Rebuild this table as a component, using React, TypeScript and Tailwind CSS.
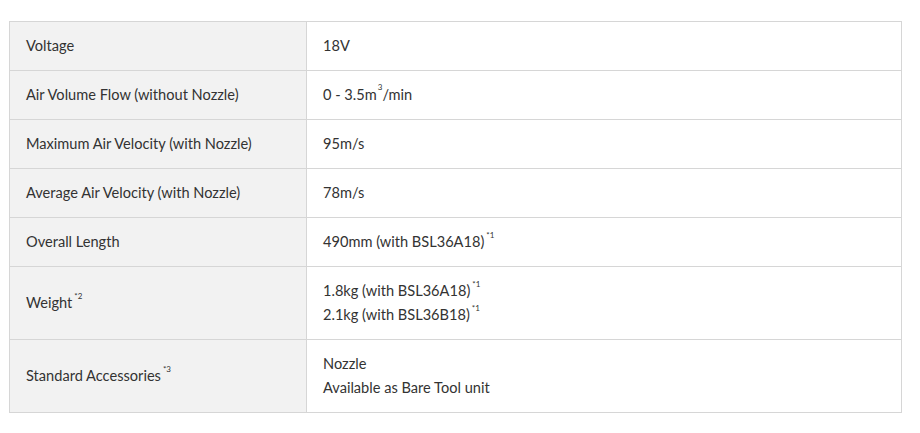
const Sup = ({ children }: { children: React.ReactNode }) => (
  <sup className="relative -top-[9px] ml-[2px] text-[8px]">{children}</sup>
);

const rows: { label: React.ReactNode; value: React.ReactNode }[] = [
  { label: "Voltage", value: "18V" },
  {
    label: "Air Volume Flow (without Nozzle)",
    value: (
      <>
        0 - 3.5m<sup className="relative -top-[10px] ml-px text-[8px]">3</sup>/min
      </>
    ),
  },
  { label: "Maximum Air Velocity (with Nozzle)", value: "95m/s" },
  { label: "Average Air Velocity (with Nozzle)", value: "78m/s" },
  {
    label: "Overall Length",
    value: (
      <>
        490mm (with BSL36A18)<Sup>*1</Sup>
      </>
    ),
  },
  {
    label: (
      <>
        Weight<Sup>*2</Sup>
      </>
    ),
    value: (
      <>
        1.8kg (with BSL36A18)<Sup>*1</Sup>
        <br />
        2.1kg (with BSL36B18)<Sup>*1</Sup>
      </>
    ),
  },
  {
    label: (
      <>
        Standard Accessories<Sup>*3</Sup>
      </>
    ),
    value: (
      <>
        Nozzle
        <br />
        Available as Bare Tool unit
      </>
    ),
  },
];

export default function App() {
  return (
    <div className="bg-white px-[9px] pt-[21px] pb-5 font-['Lato','Noto_Sans',sans-serif] text-[14.6px] text-[#333]">
      <table className="w-[893px] border-collapse">
        <tbody>
          {rows.map((row, i) => (
            <tr key={i}>
              <td className="w-[297px] border border-[#d6d6d6] bg-[#f2f2f2] px-4 py-3 leading-6">
                {row.label}
              </td>
              <td className="border border-[#d6d6d6] px-4 py-3 leading-6">{row.value}</td>
            </tr>
          ))}
        </tbody>
      </table>
    </div>
  );
}
